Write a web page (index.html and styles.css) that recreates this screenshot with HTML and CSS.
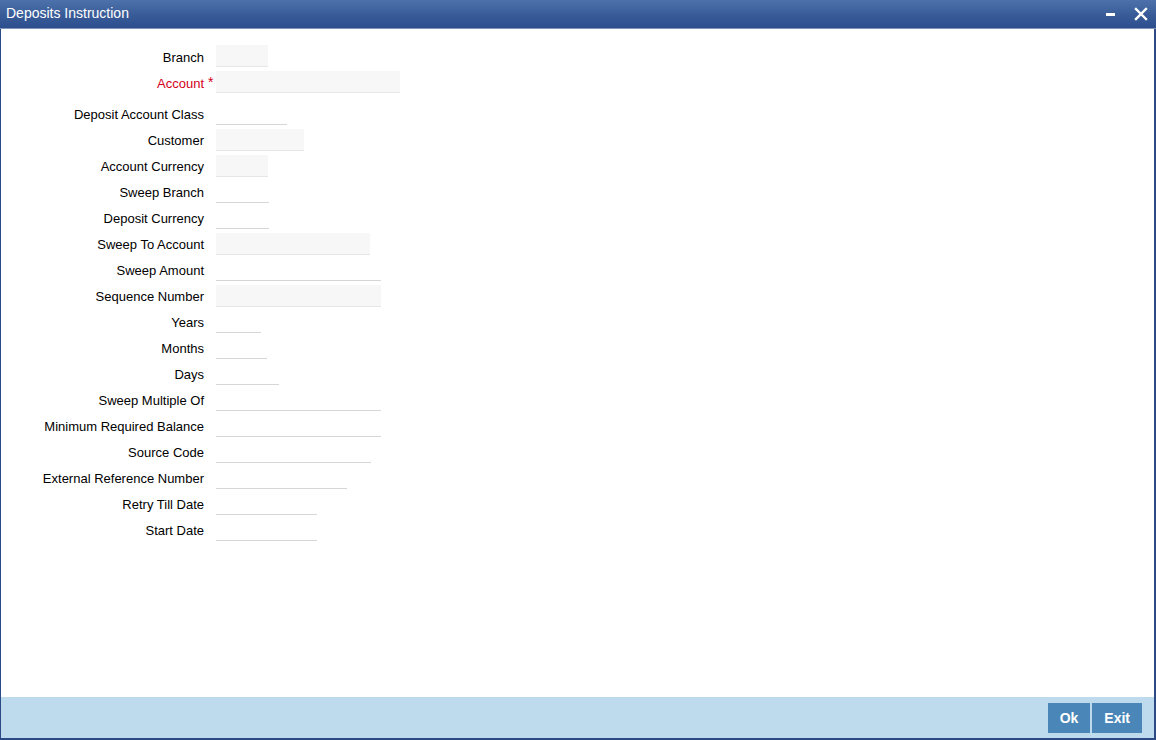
FILE: index.html
```html
<!DOCTYPE html>
<html>
<head>
<meta charset="utf-8">
<link rel="stylesheet" href="styles.css">
</head>
<body>
<div class="window">
  <div class="titlebar">
    <span class="title">Deposits Instruction</span>
    <div class="controls">
      <svg class="ctl" width="12" height="12" viewBox="0 0 12 12"><rect x="1" y="5" width="9" height="3" fill="#fff"/></svg>
      <svg class="ctl" width="14" height="14" viewBox="0 0 14 14"><path d="M2 2 L12 12 M12 2 L2 12" stroke="#fff" stroke-width="2.4" stroke-linecap="square"/></svg>
    </div>
  </div>
  <div class="content">
    <div class="form">
      <div class="row top"><label class="lbl">Branch</label><span class="req"></span><span class="fld ro" style="width:52px"></span></div>
      <div class="row top"><label class="lbl red">Account</label><span class="req">*</span><span class="fld ro" style="width:184px"></span></div>
      <div class="row gap"><label class="lbl">Deposit Account Class</label><span class="req"></span><span class="fld" style="width:71px"></span></div>
      <div class="row"><label class="lbl">Customer</label><span class="req"></span><span class="fld ro" style="width:88px"></span></div>
      <div class="row"><label class="lbl">Account Currency</label><span class="req"></span><span class="fld ro" style="width:52px"></span></div>
      <div class="row"><label class="lbl">Sweep Branch</label><span class="req"></span><span class="fld" style="width:53px"></span></div>
      <div class="row"><label class="lbl">Deposit Currency</label><span class="req"></span><span class="fld" style="width:53px"></span></div>
      <div class="row"><label class="lbl">Sweep To Account</label><span class="req"></span><span class="fld ro" style="width:154px"></span></div>
      <div class="row"><label class="lbl">Sweep Amount</label><span class="req"></span><span class="fld" style="width:165px"></span></div>
      <div class="row"><label class="lbl">Sequence Number</label><span class="req"></span><span class="fld ro" style="width:165px"></span></div>
      <div class="row"><label class="lbl">Years</label><span class="req"></span><span class="fld" style="width:45px"></span></div>
      <div class="row"><label class="lbl">Months</label><span class="req"></span><span class="fld" style="width:51px"></span></div>
      <div class="row"><label class="lbl">Days</label><span class="req"></span><span class="fld" style="width:63px"></span></div>
      <div class="row"><label class="lbl">Sweep Multiple Of</label><span class="req"></span><span class="fld" style="width:165px"></span></div>
      <div class="row"><label class="lbl">Minimum Required Balance</label><span class="req"></span><span class="fld" style="width:165px"></span></div>
      <div class="row"><label class="lbl">Source Code</label><span class="req"></span><span class="fld" style="width:155px"></span></div>
      <div class="row"><label class="lbl">External Reference Number</label><span class="req"></span><span class="fld" style="width:131px"></span></div>
      <div class="row"><label class="lbl">Retry Till Date</label><span class="req"></span><span class="fld" style="width:101px"></span></div>
      <div class="row"><label class="lbl">Start Date</label><span class="req"></span><span class="fld" style="width:101px"></span></div>
    </div>
  </div>
  <div class="footer">
    <button class="btn">Ok</button>
    <button class="btn">Exit</button>
  </div>
</div>
</body>
</html>
```

FILE: styles.css
```css
html, body {
  margin: 0;
  padding: 0;
  background: #fff;
}
body {
  font-family: "Liberation Sans", Arial, sans-serif;
  font-size: 13px;
  color: #000;
}
.window {
  box-sizing: border-box;
  width: 1156px;
  height: 740px;
  border-left: 1px solid #2b4a86;
  border-right: 2px solid #2b4a86;
  border-bottom: 2px solid #2b4a86;
  display: flex;
  flex-direction: column;
}
.titlebar {
  height: 28px;
  flex: none;
  background: linear-gradient(to bottom, #4d72ab 0%, #3a5d99 50%, #2c4e8e 100%);
  border-bottom: 1px solid #8095b8;
  display: flex;
  align-items: center;
  justify-content: space-between;
  padding: 0 8px 0 6px;
  margin-left: -1px;
  margin-right: -2px;
}
.title {
  color: #fff;
  font-size: 14px;
  position: relative;
  top: -1px;
}
.controls {
  display: flex;
  align-items: center;
  gap: 17px;
}
.ctl { display: block; }
.content {
  flex: 1;
  padding-top: 16px;
}
.form {
  display: flex;
  flex-direction: column;
}
.row {
  display: flex;
  align-items: flex-start;
  height: 26px;
}
.row.gap {
  margin-top: 6px;
}
.lbl {
  width: 203px;
  text-align: right;
  line-height: 23px;
  white-space: nowrap;
}
.row.top .lbl {
  line-height: 25px;
}
.lbl.red { color: #d3001b; }
.req {
  width: 12px;
  color: #d3001b;
  font-size: 14px;
  line-height: 22px;
  padding-left: 4px;
  box-sizing: border-box;
}
.fld {
  display: block;
  height: 21px;
  border-bottom: 1px solid #d6d6d6;
  background: #fff;
}
.fld.ro {
  background: #f7f7f7;
  border-bottom-color: #e6e6e6;
}
.footer {
  height: 41px;
  flex: none;
  background: #bedaed;
  display: flex;
  justify-content: flex-end;
  align-items: flex-start;
  gap: 2px;
  padding: 6px 12px 0 0;
  box-sizing: border-box;
}
.btn {
  height: 30px;
  border: none;
  background: #4a87b8;
  color: #fff;
  font-family: "Liberation Sans", Arial, sans-serif;
  font-size: 14px;
  font-weight: bold;
  padding: 0 12px;
  margin: 0;
}
```
